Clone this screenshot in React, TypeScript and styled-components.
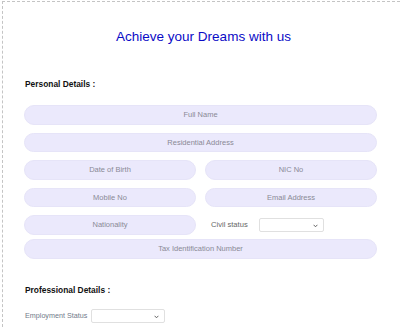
import styled, { createGlobalStyle } from 'styled-components'
import type { FunctionComponent } from 'react'

const GlobalStyle = createGlobalStyle`
  html, body {
    margin: 0;
    padding: 0;
    background: #ffffff;
    overflow: hidden;
  }
  body {
    font-family: "Liberation Sans", Arial, sans-serif;
  }
`

const Page = styled.main`
  box-sizing: border-box;
  margin: 1px 0 0 2px;
  min-height: 326px;
  border-top: 1px dashed #c4c4c4;
  border-left: 1px dashed #c4c4c4;
  padding: 27px 23px 0 21px;
`

const Title = styled.h1`
  margin: 0 0 0 6px;
  font-size: 13.5px;
  line-height: 16px;
  font-weight: 400;
  color: #0b0bc6;
  text-align: center;
`

const SectionHeading = styled.h2<{ $top: number }>`
  margin: ${({ $top }) => $top}px 0 0 1px;
  font-size: 8.4px;
  line-height: 10px;
  font-weight: 700;
  color: #111111;
`

const Form = styled.form`
  margin-top: 16px;
  display: flex;
  flex-direction: column;
  gap: 8px;
`

const Row = styled.div<{ $tight?: boolean }>`
  display: grid;
  grid-template-columns: 1fr 1fr;
  column-gap: 9px;
  margin-top: ${({ $tight }) => ($tight ? '-3.5px' : '0')};
`

const Pill = styled.input<{ $wide?: boolean }>`
  box-sizing: border-box;
  grid-column: ${({ $wide }) => ($wide ? '1 / -1' : 'auto')};
  width: 100%;
  height: 19.5px;
  margin: 0;
  padding: 0 8px;
  border: 1px solid #e6e4f8;
  border-radius: 10px;
  background: #ebe9fc;
  font-family: "Liberation Sans", Arial, sans-serif;
  font-size: 7.5px;
  text-align: center;
  color: #333;
  outline: none;

  &::placeholder {
    color: #8a8a96;
  }
`

const InlineField = styled.div<{ $indent: number; $gap: number }>`
  display: flex;
  align-items: center;
  padding-left: ${({ $indent }) => $indent}px;
  gap: ${({ $gap }) => $gap}px;
`

const FieldLabel = styled.label<{ $tone: string; $size: number }>`
  font-size: ${({ $size }) => $size}px;
  color: ${({ $tone }) => $tone};
  white-space: nowrap;
`

const SelectWrap = styled.div<{ $width: number; $height: number }>`
  position: relative;
  width: ${({ $width }) => $width}px;
  height: ${({ $height }) => $height}px;
`

const Select = styled.select`
  display: block;
  box-sizing: border-box;
  appearance: none;
  width: 100%;
  height: 100%;
  margin: 0;
  border: 1px solid #e0e0e0;
  border-radius: 2px;
  background: #ffffff;
  font-size: 7px;
`

const Chevron = styled.svg`
  position: absolute;
  right: 6px;
  top: 50%;
  width: 5px;
  height: 4px;
  margin-top: -1px;
  pointer-events: none;
`

const Professional = styled.section`
  display: flex;
  flex-direction: column;
`

const EmploymentRow = styled(InlineField)`
  margin-top: 14px;
`

const Dropdown: FunctionComponent<{ width: number; height: number; id: string }> = ({
  width,
  height,
  id,
}) => (
  <SelectWrap $width={width} $height={height}>
    <Select id={id} defaultValue="">
      <option value="" />
    </Select>
    <Chevron viewBox="0 0 5 4">
      <path d="M0.6 0.8 L2.5 2.8 L4.4 0.8" fill="none" stroke="#555" strokeWidth="0.9" />
    </Chevron>
  </SelectWrap>
)

const App: FunctionComponent = () => (
  <>
    <GlobalStyle />
    <Page>
      <Title>Achieve your Dreams with us</Title>

      <SectionHeading $top={34}>Personal Details :</SectionHeading>

      <Form onSubmit={(e) => e.preventDefault()}>
        <Row>
          <Pill $wide placeholder="Full Name" />
        </Row>
        <Row>
          <Pill $wide placeholder="Residential Address" />
        </Row>
        <Row>
          <Pill placeholder="Date of Birth" />
          <Pill placeholder="NIC No" />
        </Row>
        <Row>
          <Pill placeholder="Mobile No" />
          <Pill placeholder="Email Address" />
        </Row>
        <Row>
          <Pill placeholder="Nationality" />
          <InlineField $indent={6} $gap={11}>
            <FieldLabel htmlFor="civil" $tone="#666666" $size={7.6}>
              Civil status
            </FieldLabel>
            <Dropdown id="civil" width={65} height={14} />
          </InlineField>
        </Row>
        <Row $tight>
          <Pill $wide placeholder="Tax Identification Number" />
        </Row>
      </Form>

      <Professional>
        <SectionHeading $top={26}>Professional Details :</SectionHeading>
        <EmploymentRow $indent={1} $gap={4}>
          <FieldLabel htmlFor="employment" $tone="#717a8a" $size={7.2}>
            Employment Status
          </FieldLabel>
          <Dropdown id="employment" width={74} height={14} />
        </EmploymentRow>
      </Professional>
    </Page>
  </>
)

export default App
